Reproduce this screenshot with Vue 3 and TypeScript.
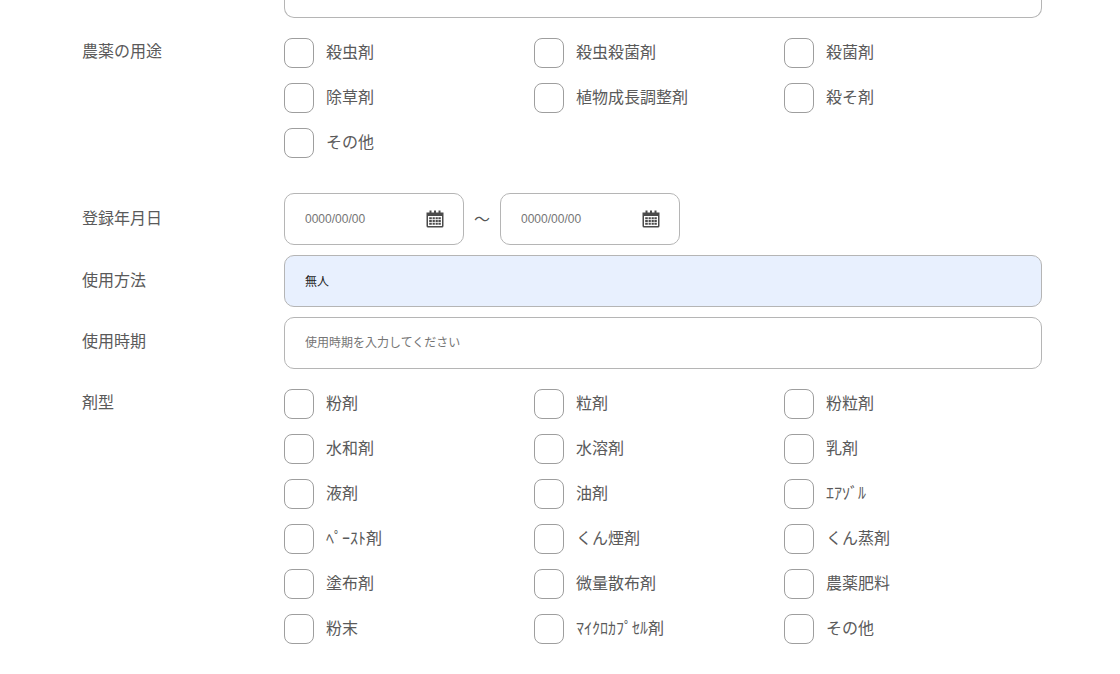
<script setup lang="ts">
const usages: string[] = ['殺虫剤', '殺虫殺菌剤', '殺菌剤', '除草剤', '植物成長調整剤', '殺そ剤', 'その他']
const forms: string[] = [
  '粉剤', '粒剤', '粉粒剤',
  '水和剤', '水溶剤', '乳剤',
  '液剤', '油剤', 'ｴｱｿﾞﾙ',
  'ﾍﾟｰｽﾄ剤', 'くん煙剤', 'くん蒸剤',
  '塗布剤', '微量散布剤', '農薬肥料',
  '粉末', 'ﾏｲｸﾛｶﾌﾟｾﾙ剤', 'その他',
]
const dates: string[] = ['from', 'to']
</script>

<template>
  <main class="form">
    <div class="row clipped-row">
      <div class="control"><div class="clipped"></div></div>
    </div>

    <div class="row usage-row">
      <div class="label check-label">農薬の用途</div>
      <div class="control checks">
        <label v-for="u in usages" :key="u" class="check">
          <input type="checkbox" />
          <span>{{ u }}</span>
        </label>
      </div>
    </div>

    <div class="row date-row">
      <div class="label">登録年月日</div>
      <div class="control dates">
        <template v-for="(d, i) in dates" :key="d">
          <span v-if="i === 1" class="tilde">～</span>
          <div class="date">
            <input type="text" placeholder="0000/00/00" />
            <svg class="cal" width="18" height="18" viewBox="0 0 18 18" aria-hidden="true">
              <path fill="#4a4a4a" d="M0.5 2.5H17.5V16a1.5 1.5 0 0 1-1.5 1.5H2A1.5 1.5 0 0 1 .5 16z"/>
              <path fill="#4a4a4a" d="M3.5.5h2v3h-2zM8 .5h2v3H8zM12.5.5h2v3h-2z"/>
              <rect x="2" y="6" width="14" height="10" fill="#fff"/>
              <path fill="#4a4a4a" d="M3.2 7.2h2.6v2H3.2zM6.6 7.2h2.2v2H6.6zM9.6 7.2h2.2v2H9.6zM12.4 7.2h2.4v2h-2.4zM3.2 10h2.6v2H3.2zM6.6 10h2.2v2H6.6zM9.6 10h2.2v2H9.6zM12.4 10h2.4v2h-2.4zM3.2 12.8h2.6v2H3.2zM6.6 12.8h2.2v2H6.6zM9.6 12.8h2.2v2H9.6zM12.4 12.8h2.4v2h-2.4z"/>
            </svg>
          </div>
        </template>
      </div>
    </div>

    <div class="row">
      <div class="label">使用方法</div>
      <div class="control"><input class="text filled" type="text" value="無人" /></div>
    </div>

    <div class="row">
      <div class="label label-raised">使用時期</div>
      <div class="control"><input class="text" type="text" placeholder="使用時期を入力してください" /></div>
    </div>

    <div class="row form-row">
      <div class="label check-label">剤型</div>
      <div class="control checks">
        <label v-for="(f, i) in forms" :key="i" class="check">
          <input type="checkbox" />
          <span>{{ f }}</span>
        </label>
      </div>
    </div>
  </main>
</template>

<style scoped>
.form {
  width: 1120px;
  height: 674px;
  overflow: hidden;
  box-sizing: border-box;
  padding-left: 82px;
  display: flex;
  flex-direction: column;
  gap: 10px;
  background: #fff;
  color: #5a5a5a;
  font-family: "Liberation Sans", "Noto Sans CJK JP", sans-serif;
  font-size: 16px;
}
.row {
  display: flex;
  width: 960px;
}
.clipped-row {
  padding-left: 202px;
}
.label {
  width: 202px;
  flex: none;
  height: 52px;
  display: flex;
  align-items: center;
  line-height: 24px;
  box-sizing: border-box;
}
.label-raised {
  padding-bottom: 2px;
}
.check-label {
  height: 30px;
  padding-bottom: 3px;
}
.control {
  width: 758px;
  flex: none;
}
.clipped {
  height: 18px;
  box-sizing: border-box;
  border: 1px solid #b5b5b5;
  border-top: 0;
  border-radius: 0 0 10px 10px;
}
.usage-row {
  margin-top: 10px;
  margin-bottom: 25px;
}
.form-row {
  margin-top: 10px;
}
.checks {
  display: grid;
  grid-template-columns: repeat(3, 250px);
  row-gap: 15px;
}
.check {
  display: flex;
  align-items: center;
  gap: 12px;
  height: 30px;
}
.check input {
  appearance: none;
  margin: 0;
  width: 30px;
  height: 30px;
  flex: none;
  background: #fff;
  border: 1px solid #9e9e9e;
  border-radius: 8px;
}
.check span {
  line-height: 24px;
}
.dates {
  display: flex;
  align-items: center;
}
.tilde {
  width: 36px;
  text-align: center;
  font-size: 16px;
  color: #555;
  position: relative;
  top: -1px;
}
.date {
  width: 180px;
  height: 52px;
  box-sizing: border-box;
  border: 1px solid #b5b5b5;
  border-radius: 10px;
  display: flex;
  align-items: center;
  padding: 0 19px 0 20px;
}
.date input {
  flex: 1;
  min-width: 0;
  border: 0;
  outline: 0;
  padding: 0;
  font: inherit;
  font-size: 12px;
  color: #333;
  background: transparent;
}
.cal {
  flex: none;
}
.text {
  display: block;
  width: 100%;
  height: 52px;
  box-sizing: border-box;
  border: 1px solid #b5b5b5;
  border-radius: 10px;
  padding: 0 20px;
  outline: 0;
  font: inherit;
  font-size: 12px;
  color: #222;
  background: #fff;
}
.filled {
  background: #e8f0fe;
  padding-bottom: 2px;
}
input::placeholder {
  color: #757575;
  opacity: 1;
}
</style>
